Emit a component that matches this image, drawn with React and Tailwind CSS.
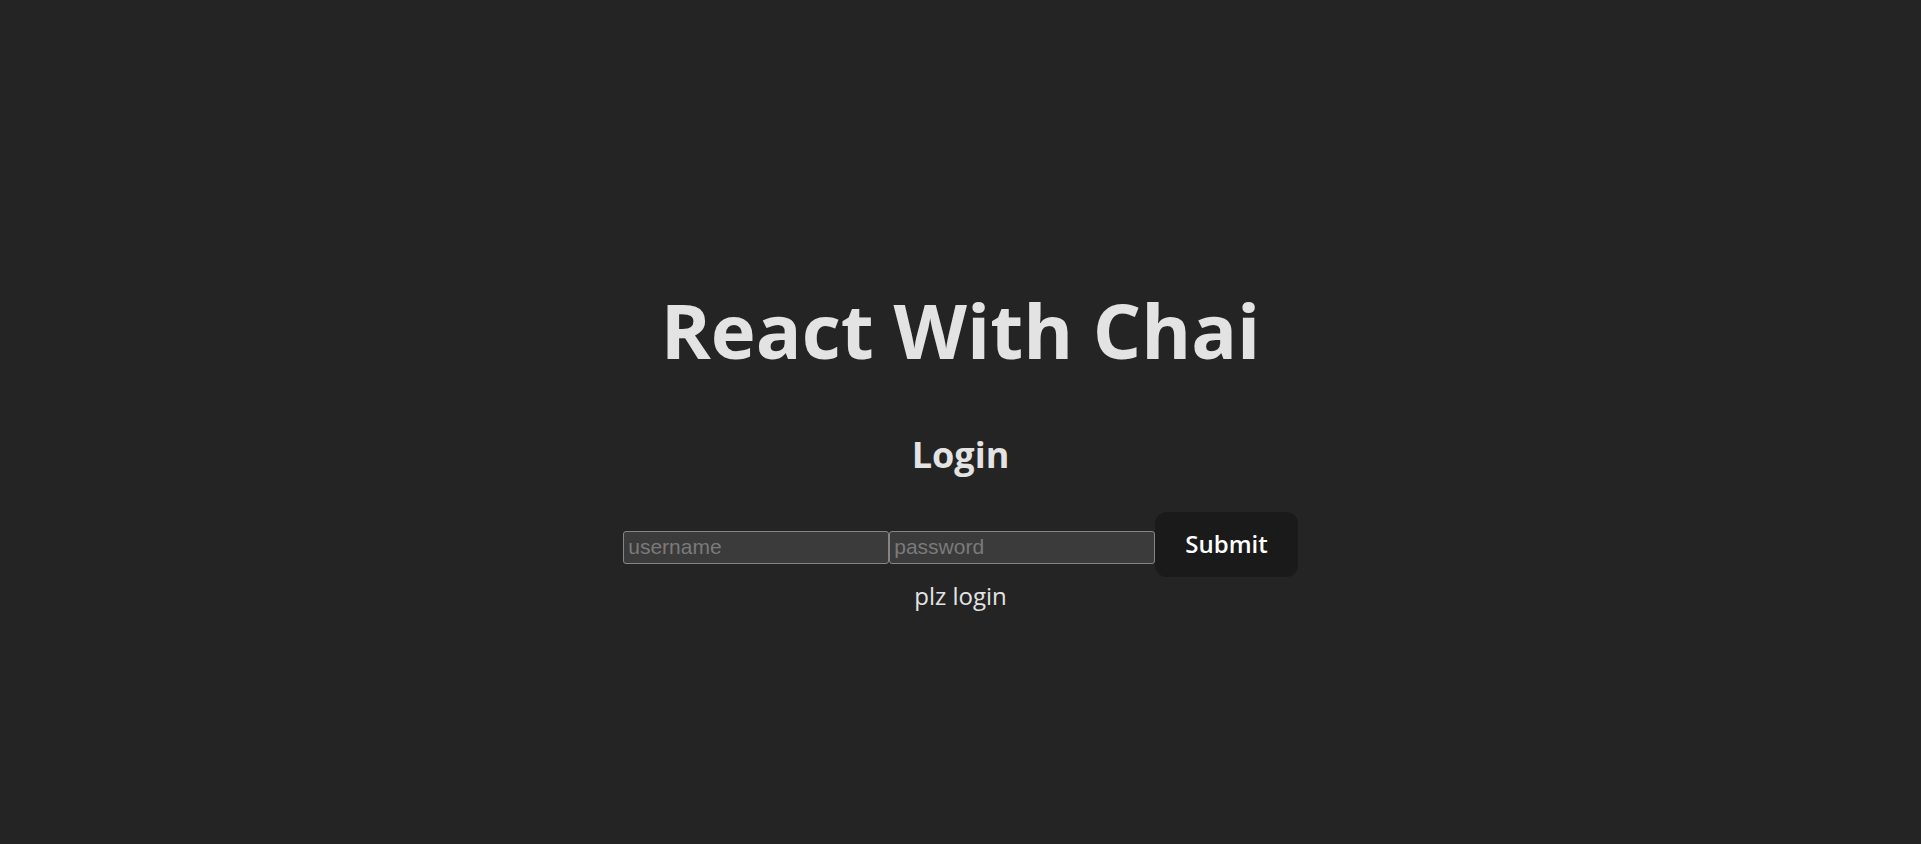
export default function App() {
  return (
    <div className="min-h-screen w-full bg-[#242424] flex flex-col items-center pt-[288px] text-[#e3e3e3] font-['Open_Sans','Noto_Sans',sans-serif]">
      <h1 className="text-[76px] leading-[1.1] font-bold m-0">React With Chai</h1>
      <h2 className="text-[36px] leading-[54px] font-bold mt-[56px]">Login</h2>
      <div className="flex items-start mt-[30px]">
        <input
          type="text"
          placeholder="username"
          className="w-[266px] h-[33px] mt-[19px] bg-[#3b3b3b] border border-[#858585] rounded-[3px] px-[4px] text-[21px] text-white placeholder:text-[#7a7a7a] font-['Liberation_Sans',Arial,sans-serif] outline-none"
        />
        <input
          type="password"
          placeholder="password"
          className="w-[266px] h-[33px] mt-[19px] bg-[#3b3b3b] border border-[#858585] rounded-[3px] px-[4px] text-[21px] text-white placeholder:text-[#7a7a7a] font-['Liberation_Sans',Arial,sans-serif] outline-none"
        />
        <button className="h-[65px] px-[29px] rounded-[12px] bg-[#1a1a1a] border border-transparent text-[24px] leading-[36px] font-semibold text-white">
          Submit
        </button>
      </div>
      <div className="text-[24px] leading-[36px] mt-[1px]">plz login</div>
    </div>
  );
}
